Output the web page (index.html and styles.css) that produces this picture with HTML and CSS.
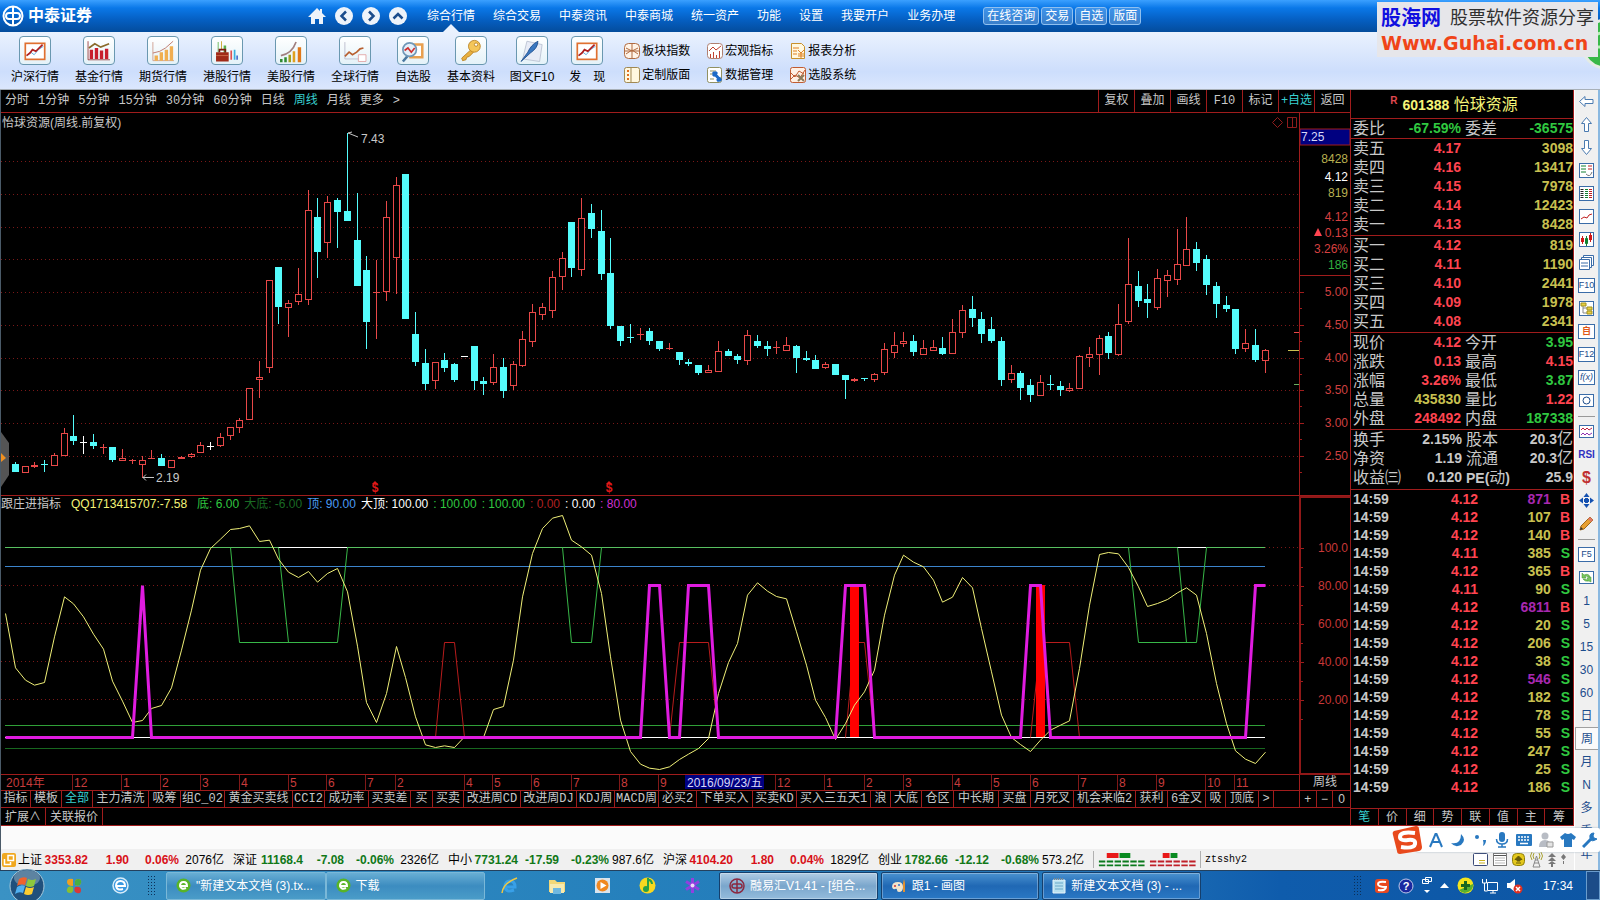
FILE: index.html
```
<!DOCTYPE html>
<html lang="zh-CN">
<head>
	<meta charset="UTF-8">
	<title>中泰证券</title>
	<link rel="stylesheet" href="styles.css">
</head>
<body>
<!-- 标题栏 -->
<header class="titlebar">
  <div class="logo">
    <svg width="22" height="22" viewBox="0 0 22 22" fill="none" stroke="#fff" stroke-width="2"><circle cx="11" cy="11" r="9.5"/><path d="M11 1v20M7 8h8a3 3 0 0 1 0 6H7a3 3 0 0 1 0-6z"/></svg>
    <h1>中泰证券</h1>
  </div>
  <div class="round-btns">
    <button type="button" aria-label="主页"><svg width="18" height="18" viewBox="0 0 18 18"><path d="M9 1L0 10h3v7h4v-5h4v5h4v-7h3l-4-4V2h-2v2z" fill="#eef3fa"/></svg></button>
    <button type="button" aria-label="后退"><svg width="18" height="18" viewBox="0 0 18 18"><circle cx="9" cy="9" r="9" fill="#eef3fa"/><path d="M11 4.500L6.500 9l4.500 4.500" fill="none" stroke="#1c4c8c" stroke-width="2.500"/></svg></button>
    <button type="button" aria-label="前进"><svg width="18" height="18" viewBox="0 0 18 18"><circle cx="9" cy="9" r="9" fill="#eef3fa"/><path d="M7 4.500L11.500 9 7 13.500" fill="none" stroke="#1c4c8c" stroke-width="2.500"/></svg></button>
    <button type="button" aria-label="向上"><svg width="18" height="18" viewBox="0 0 18 18"><circle cx="9" cy="9" r="9" fill="#eef3fa"/><path d="M4.500 11.500L9 7l4.500 4.500" fill="none" stroke="#1c4c8c" stroke-width="2.500"/></svg></button>
  </div>
  <nav class="menu">
    <a href="#" class="current">综合行情</a>
    <a href="#">综合交易</a>
    <a href="#">中泰资讯</a>
    <a href="#">中泰商城</a>
    <a href="#">统一资产</a>
    <a href="#">功能</a>
    <a href="#">设置</a>
    <a href="#">我要开户</a>
    <a href="#">业务办理</a>
  </nav>
  <div class="chips">
    <button type="button">在线咨询</button>
    <button type="button">交易</button>
    <button type="button">自选</button>
    <button type="button">版面</button>
  </div>
</header>

<!-- 工具栏 -->
<div class="toolbar">
  <a href="#" class="tool"><svg width="32" height="32" viewBox="0 0 32 32"><rect x="4.500" y="7.500" width="23" height="19" fill="#fff" stroke="#e07030" stroke-width="2"/><path d="M6 22l5-4 4 3 5-6 6-4" fill="none" stroke="#4aa0d8"/><path d="M6 22l4-3 3-4 4 2 8-8" fill="none" stroke="#b02020" stroke-width="2"/></svg><span>沪深行情</span></a>
  <a href="#" class="tool"><svg width="32" height="32" viewBox="0 0 32 32"><path d="M3 5v22h26" fill="none" stroke="#993333"/><path d="M5 15h4v11H5zM11 13h4v13h-4zM17 16h4v10h-4zM23 14h4v12h-4z" fill="#c81e2c"/><path d="M4 13l7-5 7 4 10-4" fill="none" stroke="#8a6a2a" stroke-width="2"/></svg><span>基金行情</span></a>
  <a href="#" class="tool"><svg width="32" height="32" viewBox="0 0 32 32"><path d="M4 6v22h25" fill="none" stroke="#cc9988"/><path d="M6 22h4v6H6zM12 18h4v10h-4zM18 15h4v13h-4zM24 11h4v17h-4z" fill="#f0ae50"/><path d="M4 19l8-2 7-4 9-8" fill="none" stroke="#b86a5a"/></svg><span>期货行情</span></a>
  <a href="#" class="tool"><svg width="32" height="32" viewBox="0 0 32 32"><path d="M5 6h1v12H5zM12 10h3v10h-3z" fill="#5ab04a"/><path d="M9 5h1v10H9z" fill="#c8a020"/><path d="M20 16h2v11h-2z" fill="#e05050"/><path d="M24 15h2v12h-2z" fill="#3ab0e0"/><path d="M27 22h2v5h-2z" fill="#4a70d0"/><path d="M3 18h15v11H3z" fill="#a02a18"/><path d="M7 18v-3h7v3" fill="none" stroke="#7a1a10" stroke-width="2"/><path d="M3 22h15" stroke="#d07050"/></svg><span>港股行情</span></a>
  <a href="#" class="tool"><svg width="32" height="32" viewBox="0 0 32 32"><path d="M3 26h3v4H3zM8 24h3v6H8z" fill="#2f8a30"/><path d="M13 21h3v9h-3z" fill="#a0a020"/><path d="M18 17h3v13h-3z" fill="#e0a020"/><path d="M24 12h4v18h-4z" fill="#e07818"/><path d="M4 22Q17 20 22 6" fill="none" stroke="#a08080" stroke-width="2"/></svg><span>美股行情</span></a>
  <a href="#" class="tool"><svg width="32" height="32" viewBox="0 0 32 32"><path d="M4 6v20h17" fill="none" stroke="#b8b8c8"/><path d="M4 23l5-5 4 3 5-3 4-4 4-1" fill="none" stroke="#b86030" stroke-width="2"/><path d="M20 21h9v8h-9z" fill="#fff" stroke="#e0a0a0"/></svg><span>全球行情</span></a>
  <a href="#" class="tool"><svg width="32" height="32" viewBox="0 0 32 32"><path d="M13 9h14v15H13z" fill="#fff" stroke="#e8a050" stroke-width="3"/><path d="M10 22l-6 7" stroke="#4a78a0" stroke-width="3"/><circle cx="12" cy="15" r="8" fill="#e4f0fa" stroke="#7098b8" stroke-width="2"/><path d="M6 16l4-3 4 5 4-5" fill="none" stroke="#d03030" stroke-width="2"/></svg><span>自选股</span></a>
  <a href="#" class="tool"><svg width="32" height="32" viewBox="0 0 32 32"><path d="M16 15L5 25l1 3 4-1 1-3 3-1 5-5" fill="#e8b040" stroke="#b88020"/><circle cx="20" cy="11" r="7" fill="#f4c65a" stroke="#b88020"/><circle cx="22" cy="9" r="2" fill="#fff" stroke="#b88020"/></svg><span>基本资料</span></a>
  <a href="#" class="tool narrow"><svg width="32" height="32" viewBox="0 0 32 32"><path d="M10 5l18 4-3 20-20-3z" fill="#e8ecf6" stroke="#b8c0d0"/><path d="M3 29l8-11Q15 9 23 5q0 8-9 14z" fill="#3a78c0" stroke="#1c4c8c"/></svg><span>图文F10</span></a>
  <a href="#" class="tool"><svg width="32" height="32" viewBox="0 0 32 32"><rect x="4.500" y="7.500" width="23" height="19" fill="#fff" stroke="#e07030" stroke-width="2"/><path d="M6 22l5-4 4 3 5-6 6-4" fill="none" stroke="#4aa0d8"/><path d="M6 22l4-3 3-4 4 2 8-8" fill="none" stroke="#b02020" stroke-width="2"/></svg><span>发　现</span></a>
  <div class="small-tools">
    <a href="#"><svg width="16" height="16" viewBox="0 0 16 16" fill="none" stroke="#b06a40"><rect x=".5" y=".5" width="15" height="15" rx="4" fill="#fff4e8"/><path d="M8 1v14M1 8h14M2 5l6 3 6-3M2 11l6-4 6 4"/></svg>板块指数</a>
    <a href="#"><svg width="16" height="16" viewBox="0 0 16 16" fill="none" stroke="#c04030"><rect x=".5" y=".5" width="15" height="15" rx="3" fill="#fff" stroke="#b08070"/><path d="M2 8l4-4 3 3 5-4M3.500 15v-4M6.500 15V9M9.500 15v-3M12.500 15V8"/></svg>宏观指标</a>
    <a href="#"><svg width="16" height="16" viewBox="0 0 16 16" fill="none" stroke="#c8902a"><path d="M1.500.5h10l3 3v12h-13z" fill="#fff8e0"/><path d="M3 5h6M3 8h4M3 11h4M8 7l3 3 3-3M11 10v5M8 11h6M8 13h6" stroke="#e08020"/></svg>报表分析</a>
    <a href="#"><svg width="16" height="16" viewBox="0 0 16 16" fill="none" stroke="#a08850"><rect x=".5" y=".5" width="15" height="15" rx="2" fill="#fff8e0"/><path d="M7 1v14"/><path d="M4 3v2M4 7v2M4 11v2" stroke="#e07020" stroke-width="2"/></svg>定制版面</a>
    <a href="#"><svg width="16" height="16" viewBox="0 0 16 16" fill="none" stroke="#909060"><rect x=".5" y=".5" width="14" height="15" rx="2" fill="#fff"/><path d="M3 4h6M3 7h4M3 12h4"/><path d="M6 5l8 9M6 9l4-4M10 14l4-3" stroke="#1c6ac8" stroke-width="3"/></svg>数据管理</a>
    <a href="#"><svg width="16" height="16" viewBox="0 0 16 16" fill="none" stroke="#c05a30"><rect x=".5" y=".5" width="15" height="15" rx="2" fill="#fff0e4"/><path d="M1 6l4 4 4-6 5 3M1 12l4-4 5 3 5-8"/><path d="M8 14l6-6M8 8l6 6" stroke="#8a7a5a" stroke-width="2"/></svg>选股系统</a>
  </div>
</div>

<div class="workspace">
  <div class="content">
    <div class="panels">
      <section class="chart-side">
        <div class="period-bar">
          <nav class="periods">
            <a href="#">分时</a><a href="#">1分钟</a><a href="#">5分钟</a><a href="#">15分钟</a><a href="#">30分钟</a><a href="#">60分钟</a><a href="#">日线</a><a href="#" class="current">周线</a><a href="#">月线</a><a href="#">更多</a><a href="#">&gt;</a>
          </nav>
          <div class="period-btns">
            <button type="button">复权</button><button type="button">叠加</button><button type="button">画线</button><button type="button">F10</button><button type="button">标记</button><button type="button" class="current">+自选</button><button type="button">返回</button>
          </div>
        </div>
        <div class="chart-grid">
          <svg class="kline" id="kline"></svg>
          <svg class="kline-scale" id="klineScale"></svg>
          <div class="indicator">
            <p class="legend">
              <span class="silver name">跟庄进指标</span>
              <span class="pale name">QQ1713415707:-7.58</span>
              <span class="green">底: 6.00</span>
              <span class="dark-green">大底: -6.00</span>
              <span class="blue">顶: 90.00</span>
              <span class="white">大顶: 100.00</span>
              <span class="green">: 100.00</span>
              <span class="green">: 100.00</span>
              <span class="dark-red">: 0.00</span>
              <span class="white">: 0.00</span>
              <span class="magenta">: 80.00</span>
            </p>
            <svg class="wave" id="wave"></svg>
          </div>
          <svg class="wave-scale" id="waveScale"></svg>
          <svg class="axis" id="axis"></svg>
          <div class="axis-name">周线</div>
          <div class="tabs">
            <button type="button">指标</button><button type="button">模板</button><button type="button" class="current">全部</button><button type="button">主力清洗</button><button type="button">吸筹</button><button type="button">组C_02</button><button type="button">黄金买卖线</button><button type="button">CCI2</button><button type="button">成功率</button><button type="button">买卖差</button><button type="button">买</button><button type="button">买卖</button><button type="button">改进周CD</button><button type="button">改进周DJ</button><button type="button">KDJ周</button><button type="button">MACD周</button><button type="button">必买2</button><button type="button">下单买入</button><button type="button">买卖KD</button><button type="button">买入三五天1</button><button type="button">浪</button><button type="button">大底</button><button type="button">仓区</button><button type="button">中长期</button><button type="button">买盘</button><button type="button">月死叉</button><button type="button">机会来临2</button><button type="button">获利</button><button type="button">6金叉</button><button type="button">吸</button><button type="button">顶底</button><button type="button">&gt;</button>
          </div>
          <div class="zoom-btns">
            <button type="button">+</button><button type="button">−</button><button type="button">0</button>
          </div>
        </div>
        <div class="ext-row">
          <button type="button">扩展∧</button><button type="button">关联报价</button>
        </div>
      </section>

      <!-- 盘口 -->
      <section class="quote">
        <h2><sup>R</sup><b>601388</b> 怡球资源</h2>
        <table class="book">
          <tr><th>委比</th><td class="green">-67.59%</td><th>委差</th><td class="green">-36575</td></tr>
        </table>
        <table class="book">
          <tr><th>卖五</th><td class="red">4.17</td><td class="yellow vol">3098</td></tr>
          <tr><th>卖四</th><td class="red">4.16</td><td class="yellow vol">13417</td></tr>
          <tr><th>卖三</th><td class="red">4.15</td><td class="yellow vol">7978</td></tr>
          <tr><th>卖二</th><td class="red">4.14</td><td class="yellow vol">12423</td></tr>
          <tr><th>卖一</th><td class="red">4.13</td><td class="yellow vol">8428</td></tr>
        </table>
        <table class="book">
          <tr><th>买一</th><td class="red">4.12</td><td class="yellow vol">819</td></tr>
          <tr><th>买二</th><td class="red">4.11</td><td class="yellow vol">1190</td></tr>
          <tr><th>买三</th><td class="red">4.10</td><td class="yellow vol">2441</td></tr>
          <tr><th>买四</th><td class="red">4.09</td><td class="yellow vol">1978</td></tr>
          <tr><th>买五</th><td class="red">4.08</td><td class="yellow vol">2341</td></tr>
        </table>
        <table class="book">
          <tr><th>现价</th><td class="red">4.12</td><th>今开</th><td class="green">3.95</td></tr>
          <tr><th>涨跌</th><td class="red">0.13</td><th>最高</th><td class="red">4.15</td></tr>
          <tr><th>涨幅</th><td class="red">3.26%</td><th>最低</th><td class="green">3.87</td></tr>
          <tr><th>总量</th><td class="yellow">435830</td><th>量比</th><td class="red">1.22</td></tr>
          <tr><th>外盘</th><td class="red">248492</td><th>内盘</th><td class="green">187338</td></tr>
        </table>
        <table class="book short">
          <tr><th>换手</th><td>2.15%</td><th>股本</th><td>20.3<i>亿</i></td></tr>
          <tr><th>净资</th><td>1.19</th><th>流通</th><td>20.3<i>亿</i></td></tr>
          <tr><th>收益㈢</th><td>0.120</td><th><b>PE(</b>动<b>)</b></th><td>25.9</td></tr>
        </table>
        <table class="deals" id="deals"></table>
        <div class="quote-tabs">
          <button type="button" class="current">笔</button><button type="button">价</button><button type="button">细</button><button type="button">势</button><button type="button">联</button><button type="button">值</button><button type="button">主</button><button type="button">筹</button>
        </div>
      </section>
    </div>
    <div class="blank"></div>

    <!-- 指数栏 -->
    <footer class="status">
      <svg class="status-icon" width="14" height="14" viewBox="0 0 14 14"><rect width="14" height="14" rx="2" fill="#f0a820"/><path d="M6 2.500h5.500v5H6zM2.500 6v5.500h6V9" fill="none" stroke="#fff" stroke-width="1.500"/></svg>
      <div class="index up"><span>上证</span><b>3353.82</b><b>1.90</b><b>0.06%</b><span>2076亿</span></div>
      <div class="index down"><span>深证</span><b>11168.4</b><b>-7.08</b><b>-0.06%</b><span>2326亿</span></div>
      <div class="index down"><span>中小</span><b>7731.24</b><b>-17.59</b><b>-0.23%</b><span>987.6亿</span></div>
      <div class="index up"><span>沪深</span><b>4104.20</b><b>1.80</b><b>0.04%</b><span>1829亿</span></div>
      <div class="index down"><span>创业</span><b>1782.66</b><b>-12.12</b><b>-0.68%</b><span>573.2亿</span></div>
      <svg class="heat" width="108" height="17" viewBox="0 0 108 17"><path d="M13 2h12v5H13zM70 2h7v5h-7z" fill="#e81818"/><path d="M26 2h11v5H26zM78 2h7v5h-7z" fill="#088a20"/><path d="M5 10.500h47M5 14.500h47" stroke="#0a7a1c" stroke-width="2" stroke-dasharray="6.500 1.500"/><path d="M57 10.500h47M57 14.500h47" stroke="#c02028" stroke-width="2" stroke-dasharray="6.500 1.500"/></svg>
      <span class="user">ztsshy2</span>
      <div class="status-right">
        <svg width="15" height="14" viewBox="0 0 15 14"><rect x=".5" y=".5" width="14" height="12" rx="1" fill="#fff" stroke="#3a4a78"/><path d="M6 7.500h6M6 10h6" stroke="#c8b020"/></svg>
        <svg width="14" height="14" viewBox="0 0 14 14"><rect x=".5" y=".5" width="13" height="12" fill="#fff" stroke="#777"/><path d="M1 2.500h12" stroke="#555"/><path d="M2 5h10M2 7.500h10M2 10h10" stroke="#bbb"/></svg>
        <svg width="13" height="13" viewBox="0 0 13 13"><rect x=".5" y=".5" width="12" height="12" rx="4" fill="#e4c81c" stroke="#90800c"/><path d="M6.500 3L3 6.500h2V8h3V6.500h2zM4 10h5" fill="#665a08" stroke="#665a08"/></svg>
        <svg width="13" height="17" viewBox="0 0 13 17" fill="none" stroke="#888"><path d="M6.500 5L3 16h7zM4 12h5M5 9h3"/><path d="M4 2q-2 3 0 6M9 2q2 3 0 6M2 1q-3 4 0 8M11 1q3 4 0 8" stroke="#a8a030"/></svg>
        <svg width="8" height="15" viewBox="0 0 8 15" fill="#777"><path d="M4 1l4 4H0zM4 5l4 4H0zM4 9l4 3H5v3H3v-3H0z"/></svg>
        <svg width="5" height="15" viewBox="0 0 5 15" fill="#777"><path d="M2.500 2L5 5 2.500 8 0 5zM2 9h1v3H2z"/></svg>
      </div>
    </footer>
  </div>

  <!-- 右侧工具条 -->
  <aside class="side-tools">
    <button type="button" aria-label="左"><svg viewBox="0 0 15 15"><path d="M.5 7.500L6 2.500v3h8v4H6v3z" fill="#fff" stroke="#4a7ab0"/></svg></button>
    <button type="button" aria-label="上"><svg viewBox="0 0 15 15"><path d="M7.500.5l5 6h-3v8h-4v-8h-3z" fill="#fff" stroke="#4a7ab0"/></svg></button>
    <button type="button" aria-label="下"><svg viewBox="0 0 15 15"><path d="M7.500 14.500l5-6h-3v-8h-4v8h-3z" fill="#fff" stroke="#4a7ab0"/></svg></button>
    <button type="button" aria-label="报价"><svg viewBox="0 0 15 15"><rect x=".5" y=".5" width="14" height="14" fill="#fff" stroke="#3a6ca8"/><path d="M2 3h5M2 6h5M2 9h5" stroke="#108030"/><path d="M9 3h4M9 6h4" stroke="#c02020"/><path d="M7 11q4 4 6-2" fill="none" stroke="#777"/></svg></button>
    <button type="button" aria-label="列表"><svg viewBox="0 0 15 15"><rect x=".5" y=".5" width="14" height="14" fill="#fff" stroke="#3a6ca8"/><path d="M3 3v9" stroke="#222" stroke-width="3" stroke-dasharray="1 1"/><path d="M7.500 3v9" stroke="#108030" stroke-width="3" stroke-dasharray="1 1"/><path d="M11.500 3v9" stroke="#c02020" stroke-width="3" stroke-dasharray="1 1"/></svg></button>
    <button type="button" aria-label="分时图"><svg viewBox="0 0 15 15"><rect x=".5" y=".5" width="14" height="14" fill="#fff" stroke="#3a6ca8"/><path d="M2 10l3-2 3 1 2-3 3-1" fill="none" stroke="#c02020"/></svg></button>
    <button type="button" aria-label="K线"><svg viewBox="0 0 15 15"><rect x=".5" y=".5" width="14" height="14" fill="#fff" stroke="#3a6ca8"/><path d="M3.500 4v8M11.500 1v9" stroke="#d01818"/><path d="M2 6h3v4H2zM10 3h3v5h-3z" fill="#d01818"/><path d="M7.500 4v10M6.500 6.500h2v5h-2z" fill="#108030" stroke="#108030"/></svg></button>
    <button type="button" aria-label="多窗"><svg viewBox="0 0 15 15" fill="#fff" stroke="#3a6ca8"><path d="M4.500.5h10v10h-10z"/><path d="M2.500 2.500h10v10h-10z"/><path d="M.5 4.500h10v10H.5zM2 8h7M2 11h7"/></svg></button>
    <button type="button" class="boxed">F10</button>
    <button type="button" aria-label="树"><svg viewBox="0 0 15 15"><rect x=".5" y=".5" width="14" height="14" fill="#fff" stroke="#3a6ca8"/><path d="M4 4v8h5M4 7h5" fill="none" stroke="#888"/><path d="M2 2h5v3H2zM8 6h5v3H8zM8 10h5v3H8z" fill="#e8d040" stroke="#a09020"/></svg></button>
    <button type="button" class="boxed orange">自</button>
    <button type="button" class="boxed">F12</button>
    <button type="button" class="boxed"><em>f(x)</em></button>
    <button type="button" aria-label="圆"><svg viewBox="0 0 15 15"><rect x=".5" y="1.500" width="14" height="12" fill="#fff" stroke="#3a6ca8"/><circle cx="7.500" cy="7.500" r="3.500" fill="none" stroke="#1c4c8c"/></svg></button>
    <hr>
    <button type="button" aria-label="指标"><svg viewBox="0 0 15 15"><rect x=".5" y="1.500" width="14" height="12" fill="#fff" stroke="#3a6ca8"/><path d="M2 6l2-2 2 2 2-2 2 2 3-2" fill="none" stroke="#c02040"/><path d="M2 11l2-2 2 2 2-2 2 2 3-2" fill="none" stroke="#9030b0"/></svg></button>
    <button type="button" class="rsi">RSI</button>
    <button type="button" class="dollar">$</button>
    <button type="button" aria-label="移动"><svg viewBox="0 0 15 15" fill="#1450b0"><path d="M7.500 0l3 4h-6zM7.500 15l3-4h-6zM0 7.500l4-3v6zM15 7.500l-4-3v6zM6 5h3v1h1v3H9v1H6V9H5V6h1z"/></svg></button>
    <button type="button" aria-label="铅笔"><svg viewBox="0 0 15 15"><path d="M1 14l1-4 9-9 3 3-9 9z" fill="#e8a030" stroke="#a06818"/><path d="M11 1l3 3-2 2-3-3z" fill="#e07868"/><path d="M1 14l1-3 2 2z" fill="#333"/></svg></button>
    <hr>
    <button type="button" class="boxed">F5</button>
    <button type="button" aria-label="刷新"><svg viewBox="0 0 15 15"><rect x=".5" y="1.500" width="14" height="12" fill="#fff" stroke="#3a6ca8"/><path d="M3 8V3l2 2q5-2 6 2H9Q8 6 6 6l1 2zM12 7v5l-2-1q-4 1-6-2h2q2 1 3 1L8 8z" fill="#7cc860" stroke="#3a9030" stroke-width=".5"/></svg></button>
    <button type="button">1</button>
    <button type="button">5</button>
    <button type="button">15</button>
    <button type="button">30</button>
    <button type="button">60</button>
    <button type="button">日</button>
    <button type="button" class="current">周</button>
    <button type="button">月</button>
    <button type="button">N</button>
    <button type="button">多</button>
    <button type="button">季</button>
    <button type="button">年</button>
  </aside>
</div>

<!-- 任务栏 -->
<div class="taskbar">
  <button type="button" class="start" aria-label="开始"><svg width="38" height="34" viewBox="0 0 38 34"><circle cx="19" cy="17" r="17" fill="#20507c" stroke="#a8c8d8"/><ellipse cx="19" cy="9" rx="13" ry="8" fill="#7898b0" opacity=".7"/><path d="M11 10q4-3 8-1l-2 7q-4-2-8 1z" fill="#f0622c"/><path d="M20 10q4 2 8 0l-2 7q-4 2-8 0z" fill="#8cc83c"/><path d="M9 18q4-3 8-1l-2 7q-4-2-8 1z" fill="#50b0f0"/><path d="M18 18q4 2 8 0l-2 7q-4 2-8 0z" fill="#fccc30"/></svg></button>
  <div class="quick left-quick">
    <svg width="16" height="16" viewBox="0 0 16 16"><path d="M7 1Q1 0 1 4t6 4zM9 7q-1-6 3-6t3 4-6 2z" fill="#f0a020"/><path d="M9 7q-1-6 3-6t3 4-6 2z" fill="#48b040"/><path d="M7 9q1 6-3 6t-3-4 6-2z" fill="#88c030"/><path d="M9 9q6-1 6 3t-4 3-2-6z" fill="#d83838"/></svg>
    <svg width="17" height="17" viewBox="0 0 17 17"><circle cx="8.500" cy="8.500" r="7.500" fill="#3898e0" stroke="#d8ecf8" stroke-width="1.500"/><path d="M4 9h9q0-5-4.500-5T4 9q1 5 7 3" fill="none" stroke="#fff" stroke-width="2"/></svg>
  </div>
  <i class="grip"></i>
  <div class="task-group">
    <button type="button" class="task light"><svg width="15" height="15" viewBox="0 0 15 15"><circle cx="7.500" cy="7.500" r="7" fill="#58b428"/><path d="M4 8h7q0-4-3.500-4T4 8q1 4 6 2" fill="none" stroke="#fff" stroke-width="2"/></svg>"新建文本文档 (3).tx...</button>
    <button type="button" class="task light"><svg width="15" height="15" viewBox="0 0 15 15"><circle cx="7.500" cy="7.500" r="7" fill="#58b428"/><path d="M4 8h7q0-4-3.500-4T4 8q1 4 6 2" fill="none" stroke="#fff" stroke-width="2"/></svg>下载</button>
  </div>
  <div class="quick mid-quick">
    <svg width="18" height="18" viewBox="0 0 18 18"><path d="M4 10h10q0-6-5-6t-5 6q1 6 9 3" fill="none" stroke="#38a0e8" stroke-width="3"/><path d="M1 16Q2 6 16 1" fill="none" stroke="#f0c840" stroke-width="1.500"/></svg>
    <svg width="18" height="16" viewBox="0 0 18 16"><path d="M1 2h6l2 2h8v10H1z" fill="#f4d878"/><path d="M2 6h14v9H2z" fill="#f8eab0"/><path d="M5 10h8v6H5z" fill="#70b8e0"/></svg>
    <svg width="15" height="15" viewBox="0 0 15 15"><rect width="15" height="15" fill="#d8e4ee"/><circle cx="7.500" cy="7.500" r="6" fill="#f08820"/><path d="M5.500 4l6 3.500-6 3.500z" fill="#fff"/></svg>
    <svg width="17" height="17" viewBox="0 0 17 17"><circle cx="8.500" cy="8.500" r="8" fill="#f8d820"/><path d="M9 1v11M9 2q4 2 4 5" fill="none" stroke="#28a048" stroke-width="2"/><circle cx="7" cy="12" r="3" fill="#28a048"/></svg>
    <svg width="15" height="15" viewBox="0 0 15 15"><path d="M7.500 0v15M1 3.500l13 8M14 3.500l-13 8" stroke="#9040e0" stroke-width="3"/><circle cx="7.500" cy="7.500" r="2" fill="#f0d8f8"/></svg>
  </div>
  <div class="tasks">
    <button type="button" class="task active"><svg width="16" height="16" viewBox="0 0 16 16" fill="none" stroke="#8a2840" stroke-width="1.500"><circle cx="8" cy="8" r="7"/><path d="M8 1v14M5 6h6a2 2 0 0 1 0 4H5a2 2 0 0 1 0-4z"/></svg>融易汇V1.41 - [组合...</button>
    <button type="button" class="task"><svg width="16" height="16" viewBox="0 0 16 16"><path d="M1 9q0-5 6-5 5 0 5 5t-4 5q-2 0-2-2t-2-1-3-2z" fill="#f0e4cc"/><circle cx="4" cy="8" r="1" fill="#d03030"/><circle cx="8" cy="7" r="1" fill="#3070d0"/><path d="M12 14V5l1-4 1 4v9z" fill="#e09030"/></svg>跟1 - 画图</button>
    <button type="button" class="task"><svg width="14" height="16" viewBox="0 0 14 16"><path d="M1 2h12v13H1z" fill="#b8e0f0" stroke="#e8f4fa"/><path d="M3 5h8M3 8h8M3 11h8" stroke="#6aa8c8"/><path d="M2 1h10" stroke="#7a8a90" stroke-width="2" stroke-dasharray="1 1"/></svg>新建文本文档 (3) - ...</button>
  </div>
  <div class="tray">
    <i class="grip"></i>
    <svg width="16" height="16" viewBox="0 0 16 16"><rect x="1" y="1" width="14" height="14" rx="3" fill="#e84820"/><path d="M12 4Q4 3 4 6t8 3q0 4-8 3" fill="none" stroke="#fff" stroke-width="2"/></svg>
    <svg width="16" height="16" viewBox="0 0 16 16"><circle cx="8" cy="8" r="7" fill="#1a28a0" stroke="#c0c8e8"/><text x="8" y="12" text-anchor="middle" class="help">?</text></svg>
    <svg width="10" height="18" viewBox="0 0 10 18" fill="none" stroke="#fff"><path d="M3.500.5h6v4h-6zM.5 2.500h6v4h-6z"/><path d="M2 13h6l-3 3z" fill="#fff" stroke="none"/></svg>
    <svg width="9" height="5" viewBox="0 0 9 5"><path d="M4.500 0L9 5H0z" fill="#fff"/></svg>
    <svg width="17" height="17" viewBox="0 0 17 17"><circle cx="8.500" cy="8.500" r="8" fill="#f4e41c"/><path d="M2 13A8 8 0 0 0 16 7z" fill="#58b030"/><path d="M8.500 4v9M4 8.500h9" stroke="#186820" stroke-width="3"/></svg>
    <svg width="16" height="16" viewBox="0 0 16 16" fill="none" stroke="#fff"><path d="M5.500 4.500h10v8h-10zM8 15h6M11 12v3M.5 1v4h4V1M2.500 5v8h3"/></svg>
    <svg width="17" height="16" viewBox="0 0 17 16"><path d="M1 5h3l5-4v13l-5-4H1z" fill="#fff"/><circle cx="12" cy="11" r="4.500" fill="#e03020"/><path d="M10 9l4 4M14 9l-4 4" stroke="#fff" stroke-width="1.500"/></svg>
    <time>17:34</time>
    <button type="button" class="desktop" aria-label="显示桌面"></button>
  </div>
</div>

<!-- 水印 -->
<svg class="ball" width="20" height="56" viewBox="0 0 20 56"><circle cx="26" cy="27" r="24" fill="#38b848" stroke="#e4ece4" stroke-width="3"/><path d="M14 20q3-4 8-4M14 30h8" stroke="#b8f0b8" stroke-width="3" fill="none"/></svg>
<div class="watermark">
  <p><strong>股海网</strong><span>股票软件资源分享</span></p>
  <p class="url">Www.Guhai.com.cn</p>
</div>

<!-- 输入法 -->
<div class="ime">
  <svg class="ime-logo" width="30" height="28" viewBox="0 0 30 28"><path d="M2 5L24 0q3 0 3 3l3 18q0 3-3 4L8 28q-3 0-3-3L1 9q-1-3 1-4z" fill="#e8491c"/><path d="M23 7Q8 5 8 11q0 4 8 3t7 4q-1 5-14 3" fill="none" stroke="#fff" stroke-width="4"/></svg>
  <div class="ime-bar">
    <svg viewBox="0 0 16 16"><path d="M2 15L7.500 2h1L14 15M4.500 10h7" fill="none" stroke="#2878c0" stroke-width="2"/></svg>
    <svg viewBox="0 0 16 16"><path d="M11 2q6 6 0 11-6 3-10-2 10 2 10-9z" fill="#2878c0"/></svg>
    <svg viewBox="0 0 16 16"><circle cx="5" cy="5" r="2" fill="#2878c0"/><path d="M11 8h3q0 4-3 6 1-3 0-6z" fill="#2878c0"/></svg>
    <svg viewBox="0 0 16 16"><rect x="5" y="0" width="6" height="10" rx="3" fill="#2878c0"/><path d="M2.500 7q0 5 5.500 5t5.500-5M8 12v3M4 15h8" fill="none" stroke="#2878c0" stroke-width="1.500"/></svg>
    <svg viewBox="0 0 16 16"><rect y="2" width="16" height="12" rx="1" fill="#2878c0"/><path d="M2 5h12M2 8h12" stroke="#fff" stroke-width="1.500" stroke-dasharray="2 1"/><path d="M4 11.500h8" stroke="#fff" stroke-width="1.500"/></svg>
    <svg viewBox="0 0 16 16"><circle cx="7" cy="4" r="3.500" fill="#b8bcc4"/><path d="M1 15q0-7 6-7t6 7z" fill="#b8bcc4"/><path d="M9 10h6v5H9z" fill="#e4e4e4" stroke="#999"/></svg>
    <svg viewBox="0 0 16 16"><path d="M5 1q3 2 6 0l5 4-2 3-2-1v8H4V7L2 8 0 5z" fill="#2878c0"/></svg>
    <svg viewBox="0 0 16 16"><path d="M1 15l8-8" stroke="#2878c0" stroke-width="3"/><path d="M12 1q-5 0-4 5t7 1l-3-1-1-2z" fill="#2878c0" stroke="#2878c0"/></svg>
  </div>
</div>

<script src="app.js"></script>
</body>
</html>
```
FILE: styles.css
```
* {
  margin: 0;
  padding: 0;
  box-sizing: border-box;
}

body {
  background-color: #000;
  color: #c8c8c8;
  font: 12px/16px "Liberation Sans", "Noto Sans CJK SC", sans-serif;
  position: relative;
  overflow: hidden;
}

a {
  color: inherit;
  text-decoration: none;
}

button {
  border: 0;
  background: none;
  color: inherit;
  font: inherit;
  white-space: nowrap;
  cursor: pointer;
}

svg {
  display: block;
}

table {
  border-collapse: collapse;
}

/* 颜色 */
.red { color: #ff4450; }
.green { color: #30c840; }
.yellow { color: #c8c050; }
.silver { color: #c8c8c8; }
.white { color: #fff; }
.pale { color: #f4f478; }
.dark-green { color: #1a6a24; }
.blue { color: #4a9cf4; }
.dark-red { color: #b02020; }
.magenta { color: #d030d0; }
.purple { color: #a828b0; }

/* 标题栏 */
.titlebar {
  display: flex;
  align-items: center;
  height: 32px;
  background: linear-gradient(#3ba0ff, #0a78e8 25%, #0560c4 60%, #044c9c);
  color: #fff;
}

.logo {
  display: flex;
  align-items: center;
  gap: 4px;
  width: 308px;
  padding-left: 2px;
}

.logo h1 {
  font-size: 16px;
  line-height: 24px;
}

.round-btns {
  display: flex;
  gap: 9px;
  width: 119px;
}

.round-btns button {
  height: 18px;
}

.menu {
  display: flex;
  gap: 18px;
  height: 32px;
  line-height: 32px;
}

.menu .current {
  position: relative;
}

.menu .current:after {
  content: "";
  position: absolute;
  left: 16px;
  bottom: 0;
  border: 8px solid transparent;
  border-top-width: 0;
  border-bottom-color: #eaf2fe;
}

.chips {
  display: flex;
  gap: 2px;
  margin-left: 28px;
}

.chips button {
  height: 18px;
  padding: 0 3px;
  border: 1px solid #8fc0f0;
  border-radius: 3px;
  background-color: rgba(160, 200, 240, .35);
  line-height: 16px;
}

/* 工具栏 */
.toolbar {
  display: flex;
  gap: 16px;
  height: 58px;
  padding: 4px 11px 0;
  background: linear-gradient(#eaf2fe, #cddefc 70%, #dbe7fd);
  border-bottom: 1px solid #a8b0b8;
  color: #000;
}

.tool {
  display: flex;
  flex-direction: column;
  align-items: center;
  white-space: nowrap;
}

.tool.narrow {
  width: 42px;
}

.tool svg {
  border: 1px solid #6a98b0;
  border-radius: 4px;
  background: linear-gradient(#fff, #e4f2f8);
}

.tool span {
  line-height: 24px;
}

.small-tools {
  display: grid;
  grid-template-columns: repeat(3, 66px);
  gap: 8px 17px;
  align-content: center;
  padding-left: 3px;
}

.small-tools a {
  display: flex;
  gap: 2px;
  white-space: nowrap;
}

/* 主区 */
.workspace {
  display: flex;
  height: 780px;
  border-left: 1px solid #4a5a68;
}

.content {
  flex: 1;
  min-width: 0;
}

.panels {
  display: flex;
}

.chart-side {
  flex: 1;
  min-width: 0;
}

.period-bar {
  display: flex;
  justify-content: space-between;
  height: 23px;
  border-bottom: 1px solid #a01c1c;
  line-height: 23px;
}

.period-bar,
.tabs {
  font-family: "Liberation Mono", "Noto Sans CJK SC", monospace;
}

.periods {
  display: flex;
  gap: 9px;
  padding-left: 4px;
}

.period-btns {
  display: flex;
  border-right: 1px solid #a01c1c;
}

.period-btns button {
  width: 36px;
  border-left: 1px solid #a01c1c;
}

.period-bar .current,
.tabs .current,
.quote-tabs .current {
  color: #38d0d0;
}

.chart-grid {
  display: grid;
  grid-template-columns: 1fr 52px;
}

.kline,
.wave,
.axis {
  width: 100%;
}

.kline,
.kline-scale {
  height: 383px;
  border-bottom: 1px solid #a01c1c;
}

.kline-scale,
.wave-scale,
.axis-name,
.zoom-btns {
  width: 52px;
  border-left: 1px solid #a01c1c;
  border-right: 1px solid #a01c1c;
}

.indicator {
  border-bottom: 1px solid #a01c1c;
}

.legend {
  display: flex;
  gap: 5px;
  height: 16px;
  white-space: nowrap;
}

.legend .name {
  margin-right: 5px;
}

.wave {
  height: 262px;
}

.wave-scale {
  height: 279px;
  border: 2px solid #901818;
  border-right-width: 1px;
}

.axis {
  height: 16px;
  border-bottom: 1px solid #a01c1c;
}

.axis-name {
  height: 16px;
  border-bottom: 1px solid #a01c1c;
  text-align: center;
  line-height: 15px;
}

.tabs,
.zoom-btns,
.ext-row {
  height: 17px;
  border-bottom: 1px solid #a01c1c;
  line-height: 16px;
}

.tabs {
  display: grid;
  grid-template-columns: 30px 31px 31px 56px 32px 44px 68px 32px 44px 42px 22px 31px 57px 56px 38px 44px 38px 56px 44px 74px 20px 31px 32px 45px 32px 43px 62px 32px 38px 20px 33px 15px;
  overflow: hidden;
}

.tabs button,
.zoom-btns button,
.ext-row button {
  border-right: 1px solid #a01c1c;
  line-height: 16px;
}

.zoom-btns {
  display: grid;
  grid-template-columns: repeat(3, 1fr);
}

.zoom-btns button:last-child {
  border-right: 0;
}

.ext-row {
  display: flex;
  height: 18px;
  border-right: 1px solid #a01c1c;
}

.ext-row button {
  padding: 0 4px;
}

/* 盘口 */
.quote {
  width: 223px;
  border-right: 1px solid #a01c1c;
}

.quote h2 {
  height: 29px;
  padding-right: 16px;
  border-bottom: 1px solid #a01c1c;
  color: #f4f478;
  font-size: 16px;
  font-weight: normal;
  line-height: 30px;
  text-align: center;
}

.quote h2 b {
  font-size: 14px;
}

.quote sup {
  margin-right: 5px;
  color: #e04850;
  font-size: 10px;
  font-weight: bold;
  line-height: 10px;
}

.book {
  display: block;
  height: 97px;
  border-bottom: 1px solid #a01c1c;
}

.book:first-of-type {
  height: 20px;
}

.book.short {
  height: 60px;
}

.book tr,
.deals tr {
  height: 19px;
}

.book th,
.book td {
  width: 62px;
  font-size: 14px;
  font-weight: bold;
  line-height: 19px;
  text-align: right;
  white-space: nowrap;
}

.book th {
  width: 48px;
  padding-left: 2px;
  font-size: 16px;
  font-weight: normal;
  text-align: left;
}

.book .vol {
  width: 112px;
}

.book th + td + th {
  width: 50px;
  padding-left: 4px;
}

.book th b {
  font-size: 14px;
  line-height: 1px;
}

.book i {
  font-size: 16px;
  font-style: normal;
  font-weight: normal;
  line-height: 1px;
}

.deals {
  width: 222px;
  margin-bottom: 12px;
}

.deals tr {
  height: 18px;
}

.deals td {
  width: 72px;
  font-size: 14px;
  font-weight: bold;
  line-height: 18px;
  text-align: right;
}

.deals td:first-child {
  width: 54px;
  padding-left: 2px;
  text-align: left;
}

.deals td:last-child {
  width: 22px;
  padding-right: 3px;
}

.quote-tabs {
  display: grid;
  grid-template-columns: repeat(8, 1fr);
  height: 18px;
  border-top: 1px solid #a01c1c;
  border-bottom: 1px solid #a01c1c;
}

.quote-tabs button {
  border-right: 1px solid #a01c1c;
}

.quote-tabs button:last-child {
  border-right: 0;
}

/* 指数栏 */
.blank {
  height: 23px;
  background-color: #fbfbfb;
}

.status {
  display: flex;
  align-items: center;
  height: 21px;
  background-color: #f0f0f0;
  color: #000;
}

.status-icon {
  margin: 0 2px 0 1px;
}

.index {
  display: grid;
  grid-template-columns: 24px 46px 41px 50px 45px;
  width: 215px;
  text-align: right;
  white-space: nowrap;
}

.up b { color: #d81018; }
.down b { color: #107818; }

.heat {
  border-left: 1px solid #b0b0b0;
  border-right: 1px solid #b0b0b0;
}

.user {
  margin-left: 4px;
  font-family: "Liberation Mono", monospace;
  font-size: 10px;
}

.status-right {
  display: flex;
  align-items: center;
  gap: 5px;
  margin-left: auto;
  padding-right: 8px;
}

/* 右侧工具条 */
.side-tools {
  display: flex;
  flex-direction: column;
  width: 26px;
  height: 780px;
  overflow: hidden;
  background-color: #f0f0f0;
  border-left: 1px solid #fff;
  border-right: 2px solid #8ab8e0;
  color: #1c4c8c;
}

.side-tools button {
  display: flex;
  flex-shrink: 0;
  justify-content: center;
  align-items: center;
  width: 100%;
  height: 23px;
}

.side-tools svg {
  width: 15px;
  height: 15px;
}

.side-tools hr {
  flex-shrink: 0;
  height: 8px;
  margin: 0 3px;
  border: 0;
  background: linear-gradient(#999, #999) center / 100% 1px no-repeat;
}

.side-tools .boxed {
  width: 17px;
  height: 15px;
  margin: 4px 3px;
  border: 1px solid #3a6ca8;
  background-color: #fff;
  font-size: 9px;
  line-height: 13px;
}

.side-tools .orange {
  color: #e05818;
  font-weight: bold;
}

.side-tools .rsi {
  color: #3030c0;
  font-size: 10px;
  font-weight: bold;
}

.side-tools .dollar {
  color: #c03030;
  font-size: 16px;
  font-weight: bold;
}

.side-tools .current {
  border: 1px solid #a0a0a0;
  border-right: 0;
  background-color: #fafafa;
}

/* 任务栏 */
.taskbar {
  display: flex;
  align-items: center;
  height: 30px;
  border-top: 1px solid #24415e;
  background: linear-gradient(90deg, #3a92c4, #2580bc 40%, #2274b8 68%, #0f5cac 80%, #0d56a4);
  color: #fff;
}

.start {
  width: 38px;
  height: 34px;
  margin: 0 20px 0 8px;
}

.quick {
  display: flex;
  align-items: center;
}

.left-quick {
  gap: 30px;
}

.grip {
  width: 9px;
  height: 22px;
  background: radial-gradient(#0c3058 1px, transparent 1px) 0 0 / 3px 3px;
}

.left-quick + .grip {
  margin: 0 10px 0 18px;
}

.task-group {
  display: flex;
  width: 319px;
}

.task {
  display: flex;
  flex: 1;
  align-items: center;
  gap: 5px;
  min-width: 0;
  height: 28px;
  padding: 0 9px;
  border: 1px solid #153f6c;
  border-radius: 2px;
  background: linear-gradient(#4a92d0, #2068b4 50%, #2a78c4);
  box-shadow: inset 0 0 0 1px rgba(255, 255, 255, .3);
}

.task.light {
  border: 1px solid #7ab8d8;
  background: linear-gradient(#68aed4, #3c8cc0 50%, #4a9cc8);
  box-shadow: none;
}

.task.active {
  background: linear-gradient(#b0cce4, #7aa6cc 50%, #94bcdc);
}

.mid-quick {
  gap: 29px;
  width: 234px;
  padding-left: 16px;
}

.tasks {
  display: flex;
  gap: 3px;
  width: 482px;
}

.tray {
  display: flex;
  align-items: center;
  gap: 8px;
  margin-left: auto;
}

.tray .grip {
  margin-right: 4px;
}

.help {
  fill: #fff;
  font-size: 11px;
  font-weight: bold;
}

.tray time {
  margin-left: 12px;
}

.desktop {
  width: 14px;
  height: 29px;
  margin-left: 5px;
  border: 1px solid #6a9ccc;
  background-color: #1c4c88;
}

/* 浮层 */
.watermark {
  position: absolute;
  top: 2px;
  right: 2px;
  width: 221px;
  height: 55px;
  padding: 2px 4px;
  background-color: #e6e6ea;
}

.watermark p {
  display: flex;
  align-items: center;
  justify-content: space-between;
  white-space: nowrap;
}

.watermark strong {
  color: #1010e0;
  font-size: 20px;
  line-height: 28px;
}

.watermark span {
  color: #303030;
  font-size: 18px;
}

.watermark .url {
  color: #f04418;
  font: bold 19px/22px "DejaVu Sans", sans-serif;
}

.ball {
  position: absolute;
  top: 17px;
  right: 0;
}

.ime {
  position: absolute;
  top: 826px;
  right: 0;
  display: flex;
}

.ime-logo {
  margin-right: -6px;
  z-index: 1;
}

.ime-bar {
  display: flex;
  align-items: center;
  gap: 6px;
  height: 24px;
  margin-top: 2px;
  padding: 0 2px 0 12px;
  border-radius: 2px;
  background-color: #fff;
  box-shadow: 0 0 2px #9ab;
}

.ime-bar svg {
  width: 16px;
  height: 16px;
}

/* 图形文字 */
svg text {
  font-size: 12px;
}
```
FILE: app.js
```
function myGet(id) {
  return document.getElementById(id);
}

var STEP = 9.764;   // 每根K线的间距
var RED = "#e84848";
var CYAN = "#54fcfc";
var GRID = "#7a1818";

function px(i) {
  return Math.round(4 + i * STEP);
}

function line(x1, y1, x2, y2, color, extra) {
  return '<line x1="' + x1 + '" y1="' + y1 + '" x2="' + x2 + '" y2="' + y2 + '" stroke="' + color + '" ' + (extra || "") + '/>';
}

function text(x, y, str, color, anchor) {
  return '<text x="' + x + '" y="' + y + '" fill="' + color + '" text-anchor="' + (anchor || "start") + '">' + str + '</text>';
}

// K线: [类型, 最高, 实体上沿, 实体下沿, 最低]，u阳 d阴 w平，三格为一像素
var candles = [
  ["d",1045,1050,1065,1070],["d",1055,1062,1086,1086],["u",1068,1069,1088,1088],["u",1055,1065,1070,1075],["d",1050,1063,1066,1086],
  ["u",1029,1035,1067,1067],["u",953,969,1037,1037],["d",914,978,993,1005],["w",978,995,998,1031],["d",972,996,1008,1016],
  ["u",1003,1010,1013,1031],["d",1011,1011,1050,1056],["u",1017,1045,1052,1052],["u",1046,1050,1053,1063],["u",1038,1050,1064,1103],
  ["u",1020,1044,1048,1048],["d",1032,1044,1068,1068],["u",1050,1050,1074,1074],["u",1038,1042,1046,1048],["u",1029,1033,1040,1043],
  ["u",995,1004,1028,1028],["w",996,1008,1011,1021],["u",969,981,1007,1010],["u",950,951,979,991],["u",925,930,954,970],
  ["u",834,834,929,929],["u",752,801,811,864],["u",510,510,773,789],["d",471,471,591,641],["u",570,579,593,681],
  ["u",473,552,577,586],["u",240,300,569,584],["d",264,321,426,504],["u",257,276,398,443],["d",264,269,306,413],
  ["d",68,303,333,333],["d",249,390,528,528],["d",437,480,636,717],["u",449,545,550,687],["u",273,321,545,573],
  ["u",201,225,443,551],["d",192,192,627,627],["d",605,672,756,768],["d",717,759,822,840],["u",757,757,812,837],
  ["d",729,750,774,786],["d",759,762,809,816],["w",738,738,741,741],["d",708,708,813,840],["d",801,813,822,855],
  ["u",732,771,818,826],["d",744,771,843,864],["u",753,762,827,840],["u",662,687,767,770],["u",582,606,695,710],
  ["u",578,591,614,630],["u",483,501,602,624],["u",426,444,500,539],["d",336,336,474,501],["u",264,324,479,498],
  ["d",281,309,357,384],["d",300,363,492,509],["d",384,489,648,656],["d",648,648,693,707],["d",642,681,684,698],
  ["u",655,672,676,689],["d",654,663,693,704],["d",693,693,717,723],["u",698,714,717,720],["d",726,726,750,765],
  ["d",747,756,762,768],["d",765,765,789,795],["u",765,780,788,788],["u",693,723,785,785],["d",716,723,738,738],
  ["d",732,738,750,762],["u",660,675,752,765],["d",675,693,708,713],["d",693,708,717,738],["u",692,711,714,732],
  ["u",681,705,722,722],["d",705,708,744,788],["d",723,744,750,752],["d",735,750,777,777],["u",757,762,773,777],
  ["d",762,762,795,795],["d",795,795,810,867],["u",803,807,812,816],["d",803,804,807,812],["u",789,793,809,815],
  ["u",698,717,788,794],["u",666,705,728,743],["u",666,693,701,710],["d",675,693,726,737],["u",690,714,734,734],
  ["u",690,711,722,722],["d",681,714,732,735],["u",627,666,731,731],["u",585,600,668,683],["d",558,597,624,651],
  ["d",605,627,672,698],["d",621,657,693,698],["d",681,693,810,828],["u",765,789,809,818],["d",783,789,834,870],
  ["d",807,825,855,875],["u",795,816,857,857],["d",795,822,825,840],["d",813,828,840,857],["u",818,834,842,846],
  ["u",735,738,836,836],["u",711,732,743,770],["u",675,684,734,795],["d",666,678,729,746],["u",582,642,734,738],
  ["u",384,522,635,641],["d",483,528,573,590],["d",521,567,579,624],["u",477,504,593,600],["u",479,495,512,560],
  ["u",357,462,509,525],["u",321,417,467,467],["d",396,417,459,483],["d",435,447,525,555],["d",516,528,582,624],
  ["d",558,585,597,605],["d",597,597,717,732],["u",657,699,716,725],["d",657,705,750,756],["u",717,720,752,789]
];

function ky(v) {
  return Math.round(v / 3 - 3);
}

function drawKline() {
  var html = "";
  for (var g = 0; g < 10; g++) {
    var gy = Math.round(48 + g * 32.78) + .5;
    html += line(0, gy, "100%", gy, GRID, 'stroke-dasharray="1 3"');
  }
  for (var i = 0; i < candles.length; i++) {
    var c = candles[i];
    var x = px(i), hi = ky(c[1]), top = ky(c[2]), bot = ky(c[3]), lo = ky(c[4]);
    var color = c[0] == "u" ? RED : c[0] == "d" ? CYAN : "#fff";
    html += line(x + .5, hi, x + .5, lo, color);
    if (bot - top <= 1) {
      html += line(x - 3, top + .5, x + 4, top + .5, color);
    } else if (c[0] == "u") {
      html += '<rect x="' + (x - 2.5) + '" y="' + (top + .5) + '" width="6" height="' + (bot - top - 1) + '" fill="#000" stroke="' + RED + '"/>';
    } else {
      html += '<rect x="' + (x - 3) + '" y="' + top + '" width="7" height="' + (bot - top) + '" fill="' + color + '"/>';
    }
  }
  // 最高最低价标注
  html += line(347, 20, 357, 24, "#c8c8c8") + line(347, 20, 351, 19, "#c8c8c8");
  html += text(360, 30, "7.43", "#c8c8c8");
  html += '<path d="M153 364.5h-11M145 361.5l-3 3 3 3" fill="none" stroke="#c8c8c8"/>';
  html += text(155, 369, "2.19", "#c8c8c8");
  html += text(1, 14, "怡球资源(周线.前复权)", "#c8c8c8");
  // 除权标记
  [373, 607].forEach(function (x) {
    html += '<path d="M' + (x - 2) + ' 371l3-3 3 3z" fill="#e01818"/>';
    html += '<text x="' + (x + 1) + '" y="379" text-anchor="middle" class="mark">$</text>';
  });
  html += '<path d="M1276.5 4.500l5 5-5 5-5-5zM1286.5 4.500h9v10h-9zM1291.5 4.500v10" fill="none" stroke="#901c1c"/>';
  html += line(1287, 237.5, 1298, 237.5, "#c8c050") + line(1293, 219.5, 1298, 219.5, RED) + line(1293, 271.5, 1298, 271.5, "#6ab060");
  // 左侧拉出按钮
  html += '<path d="M0 319l8 11v32l-8 12z" fill="#555"/><path d="M0 340l5 5-5 4z" fill="#f09020"/>';
  myGet("kline").innerHTML = html;
}

function drawKlineScale() {
  var html = '<rect x="0" y="16" width="50" height="16" fill="#000080" stroke="#a01c1c"/>';
  html += text(1, 28, "7.25", "#d8d8f8");
  html += text(48, 50, "8428", "#b8b050", "end");
  html += text(48, 68, "4.12", "#fff", "end");
  html += text(48, 84, "819", "#b8b050", "end");
  html += text(48, 108, "4.12", "#d84040", "end");
  html += '<path d="M14 123l4-8 4 8z" fill="#ff4450"/>';
  html += text(48, 124, "0.13", "#d84040", "end");
  html += text(48, 140, "3.26%", "#d84040", "end");
  html += text(48, 156, "186", "#30b040", "end");
  html += line(0, 162.5, 50, 162.5, "#a01c1c");
  ["5.00", "4.50", "4.00", "3.50", "3.00", "2.50"].forEach(function (p, i) {
    var y = Math.round(179 + i * 32.78);
    html += line(0, y + .5, 4, y + .5, "#a01c1c") + line(0, y + 16.5, 2, y + 16.5, "#a01c1c");
    html += text(48, y + 4, p, "#d04040", "end");
  });
  myGet("klineScale").innerHTML = html;
}

// 指标曲线
var wave = [
  370,533,570,585,577,440,320,341,380,432,477,573,633,697,691,655,646,593,480,360,
  240,175,147,118,115,107,154,150,207,246,262,244,276,250,235,305,468,637,697,610,
  469,562,680,764,772,767,772,740,742,742,658,649,510,320,190,115,84,76,150,170,
  195,310,500,690,784,822,834,838,830,808,792,775,745,610,517,460,315,278,303,319,
  326,425,525,630,682,748,700,645,605,540,375,255,195,216,230,270,336,321,262,293,
  415,545,675,742,763,784,750,720,705,692,535,345,193,187,191,232,290,349,340,328,
  308,293,315,430,580,700,782,807,820,786
];

function wy(v) {
  return 225.5 - v * 1.9;
}

// points: [序号, 数值] ...
function poly(points, color, width) {
  var str = points.map(function (p) {
    return (px(p[0]) + .5) + "," + wy(p[1]);
  }).join(" ");
  return '<polyline points="' + str + '" fill="none" stroke="' + color + '" stroke-width="' + (width || 1) + '"/>';
}

function drawWave() {
  var html = "";
  var end = px(129);
  [80, 60, 40, 20].forEach(function (v) {
    html += line(0, wy(v), "100%", wy(v), GRID, 'stroke-dasharray="1 3"');
  });
  html += line(end, 35.5, "100%", 35.5, GRID, 'stroke-dasharray="1 3"');
  html += line(4, 35.5, end, 35.5, "#58c060");
  html += line(px(28), 35.5, px(35), 35.5, "#fff") + line(px(120), 35.5, px(123), 35.5, "#fff");
  html += line(4, 54.5, end, 54.5, "#3c84cc");
  html += line(4, 213.5, end, 213.5, "#30a038");
  html += line(4, 225.5, end, 225.5, "#fff");
  html += line(4, 236.5, end, 236.5, "#186820");
  html += poly([[23,100],[24,50],[34,50],[35,100]], "#38b848") + poly([[28,100],[29,50]], "#38b848");
  html += poly([[57,100],[58,50],[60,50],[61,100]], "#38b848");
  html += poly([[115,100],[116,50],[122,50],[123,100]], "#38b848") + poly([[120,100],[121,50]], "#38b848");
  html += poly([[44,0],[45,50],[46,50],[47,0]], "#b81c1c");
  html += poly([[68,0],[69,50],[72,50],[73,0]], "#b81c1c");
  html += poly([[86,0],[87,50],[88,50],[89,0]], "#b81c1c");
  html += poly([[105,0],[106,50],[109,50],[110,0]], "#b81c1c");
  [87, 106].forEach(function (i) {
    html += '<rect x="' + (px(i) - 4) + '" y="73" width="9" height="152" fill="#f00"/>';
  });
  html += poly(wave.map(function (v, i) {
    return [i, (742 - v) / 5.7];
  }), "#f0f078");
  html += poly([[0,0],[13,0],[14,80],[15,0],[65,0],[66,80],[67,80],[68,0],[69,0],[70,80],[72,80],[73,0],[85,0],[86,80],[88,80],[89,0],[104,0],[105,80],[106,80],[107,0],[127,0],[128,80],[129,80]], "#e01ce0", 3);
  myGet("wave").innerHTML = html;

  html = "";
  ["100.0", "80.00", "60.00", "40.00", "20.00"].forEach(function (v, i) {
    var y = Math.round(49.5 + i * 38);
    html += line(0, y + .5, 3, y + .5, "#a01c1c") + line(0, y + 19.5, 2, y + 19.5, "#a01c1c");
    html += text(47, y + 4, v, "#c83838", "end");
  });
  myGet("waveScale").innerHTML = html;
}

// 时间轴
function drawAxis() {
  var months = [[71,12],[120,1],[159,2],[199,3],[238,4],[287,5],[325,6],[364,7],[394,2],[463,4],[491,5],[530,6],[570,7],[618,8],[657,9],[774,12],[823,1],[863,2],[902,3],[951,4],[990,5],[1029,6],[1077,7],[1116,8],[1155,9],[1204,10],[1233,11]];
  var html = text(5, 12, "2014年", "#c83c3c");
  for (var i = 0; i < months.length; i++) {
    var x = months[i][0];
    html += line(x + .5, 0, x + .5, 15, "#801818") + text(x + 2, 12, months[i][1], "#c83c3c");
  }
  html += '<rect x="684" y="0" width="79" height="14" fill="#000080"/>' + text(686, 12, "2016/09/23/五", "#d8d8f8");
  myGet("axis").innerHTML = html;
}

// 成交明细
var deals = [
  ["4.12",871,"B"],["4.12",107,"B"],["4.12",140,"B"],["4.11",385,"S"],["4.12",365,"B"],["4.11",90,"S"],
  ["4.12",6811,"B"],["4.12",20,"S"],["4.12",206,"S"],["4.12",38,"S"],["4.12",546,"S"],["4.12",182,"S"],
  ["4.12",78,"S"],["4.12",55,"S"],["4.12",247,"S"],["4.12",25,"S"],["4.12",186,"S"]
];

function drawDeals() {
  var html = "";
  for (var i = 0; i < deals.length; i++) {
    var d = deals[i];
    html += '<tr><td>14:59</td><td class="red">' + d[0] + '</td>';
    html += '<td class="' + (d[1] > 500 ? "purple" : "yellow") + '">' + d[1] + '</td>';
    html += '<td class="' + (d[2] == "B" ? "red" : "green") + '">' + d[2] + '</td></tr>';
  }
  myGet("deals").innerHTML = html;
}

// 除权标记用小号粗体
var style = ".mark";
drawKline();
Array.prototype.forEach.call(document.querySelectorAll(style), function (el) {
  el.setAttribute("fill", "#e01818");
  el.setAttribute("font-weight", "bold");
});
drawKlineScale();
drawWave();
drawAxis();
drawDeals();
```
